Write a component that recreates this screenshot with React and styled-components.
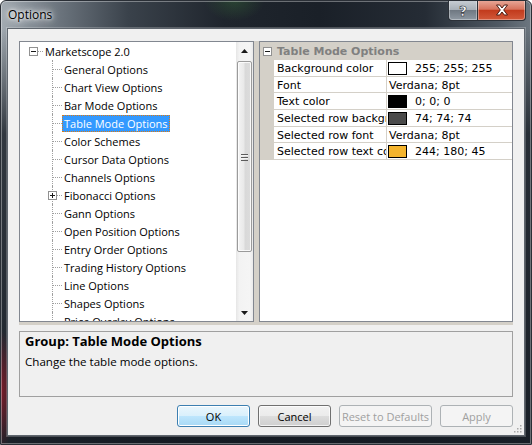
import React from 'react'
import styled, { createGlobalStyle, css } from 'styled-components'

const GlobalStyle = createGlobalStyle`
  html, body {
    margin: 0;
    padding: 0;
    background: #ffffff;
  }
  * {
    box-sizing: border-box;
  }
`

const UI_FONT = `'Open Sans', 'Noto Sans', sans-serif`
const GRID_FONT = `'DejaVu Sans', Verdana, sans-serif`

const treeItems = [
  { label: 'General Options' },
  { label: 'Chart View Options' },
  { label: 'Bar Mode Options' },
  { label: 'Table Mode Options', selected: true },
  { label: 'Color Schemes' },
  { label: 'Cursor Data Options' },
  { label: 'Channels Options' },
  { label: 'Fibonacci Options', collapsed: true },
  { label: 'Gann Options' },
  { label: 'Open Position Options' },
  { label: 'Entry Order Options' },
  { label: 'Trading History Options' },
  { label: 'Line Options' },
  { label: 'Shapes Options' },
  { label: 'Price Overlay Options' },
]

const properties = [
  { name: 'Background color', color: '#ffffff', value: '255; 255; 255' },
  { name: 'Font', value: 'Verdana; 8pt' },
  { name: 'Text color', color: '#000000', value: '0; 0; 0' },
  { name: 'Selected row background color', color: '#4a4a4a', value: '74; 74; 74' },
  { name: 'Selected row font', value: 'Verdana; 8pt' },
  { name: 'Selected row text color', color: '#f4b42d', value: '244; 180; 45' },
]

const ExpandBox = ({ plus }) => (
  <BoxIcon width='9' height='9' viewBox='0 0 9 9'>
    <rect x='0.5' y='0.5' width='8' height='8' fill='#ffffff' stroke='#919191' />
    <path d='M2 4.5h5' stroke='#1a1a1a' />
    {plus && <path d='M4.5 2v5' stroke='#1a1a1a' />}
  </BoxIcon>
)

const Arrow = ({ down }) => (
  <svg width='7' height='4' viewBox='0 0 7 4'>
    {down ? <path d='M0 0h7L3.5 4z' fill='#1a1a1a' /> : <path d='M0 4h7L3.5 0z' fill='#1a1a1a' />}
  </svg>
)

const App = () => {
  return (
    <>
      <GlobalStyle />
      <Window>
        <TitleBar>
          <Title>Options</Title>
          <CaptionButtons>
            <HelpButton>?</HelpButton>
            <CloseButton>
              <svg width='14' height='12' viewBox='0 0 14 12'>
                <path
                  d='M1.5 1h3.2L7 4l2.3-3h3.2L8.7 6l3.8 5H9.3L7 8 4.7 11H1.5l3.8-5z'
                  fill='#ffffff'
                  stroke='#4a1a12'
                  strokeWidth='1'
                  strokeLinejoin='round'
                />
              </svg>
            </CloseButton>
          </CaptionButtons>
        </TitleBar>

        <Client>
          <Split>
            <TreePanel>
              <TreeList>
                <TreeRow>
                  <Elbow>
                    <ExpandBox />
                  </Elbow>
                  <Label>Marketscope 2.0</Label>
                </TreeRow>
                {treeItems.map((item) => (
                  <TreeRow key={item.label}>
                    <Indent />
                    <Elbow $vertical>
                      {item.collapsed && <ExpandBox plus />}
                    </Elbow>
                    <Label $selected={item.selected}>{item.label}</Label>
                  </TreeRow>
                ))}
              </TreeList>
              <ScrollBar>
                <ScrollButton>
                  <Arrow />
                </ScrollButton>
                <Track>
                  <Thumb>
                    <Grip />
                  </Thumb>
                </Track>
                <ScrollButton>
                  <Arrow down />
                </ScrollButton>
              </ScrollBar>
            </TreePanel>

            <GridPanel>
              <CategoryRow>
                <ExpandBox />
                <span>Table Mode Options</span>
              </CategoryRow>
              {properties.map((prop) => (
                <PropRow key={prop.name}>
                  <Margin />
                  <PropName>{prop.name}</PropName>
                  <PropValue $plain={!prop.color}>
                    {prop.color && <Swatch style={{ background: prop.color }} />}
                    {prop.value}
                  </PropValue>
                </PropRow>
              ))}
            </GridPanel>
          </Split>

          <Description>
            <DescTitle>Group: Table Mode Options</DescTitle>
            <DescText>Change the table mode options.</DescText>
          </Description>

          <ButtonRow>
            <Button $w={73} $default>OK</Button>
            <Button $w={73}>Cancel</Button>
            <Button $w={93} disabled>Reset to Defaults</Button>
            <Button $w={73} disabled>Apply</Button>
          </ButtonRow>

          <SizeGrip width='9' height='9' viewBox='0 0 9 9'>
            <g fill='#a8a8a8'>
              <rect x='7' y='1' width='1.5' height='1.5' />
              <rect x='4' y='4' width='1.5' height='1.5' />
              <rect x='7' y='4' width='1.5' height='1.5' />
              <rect x='1' y='7' width='1.5' height='1.5' />
              <rect x='4' y='7' width='1.5' height='1.5' />
              <rect x='7' y='7' width='1.5' height='1.5' />
            </g>
          </SizeGrip>
        </Client>
      </Window>
    </>
  )
}

export default App

const Window = styled.div`
  width: 532px;
  height: 445px;
  display: flex;
  flex-direction: column;
  border: 1px solid #2a2f36;
  border-radius: 6px 6px 0 0;
  box-shadow: inset 0 0 0 1px rgba(255, 255, 255, 0.35);
  overflow: hidden;
  background:
    radial-gradient(ellipse 14px 60px at 0% 88%, rgba(140, 25, 40, 0.85), transparent),
    radial-gradient(ellipse 30px 20px at 44% 0%, rgba(60, 120, 60, 0.35), transparent),
    radial-gradient(ellipse 20px 20px at 49% 40%, rgba(150, 40, 40, 0.3), transparent),
    linear-gradient(180deg, rgba(0, 0, 0, 0) 0%, rgba(0, 0, 0, 0) 6%, rgba(22, 28, 36, 0.8) 30%, rgba(20, 26, 34, 0.95) 100%),
    linear-gradient(90deg, #a3abb2 0%, #6f7881 10%, #3a424b 24%, #1f252d 42%, #1a2028 60%, #252c35 80%, #4f5963 94%, #6d7780 100%);
`

const TitleBar = styled.div`
  height: 27px;
  display: flex;
  align-items: flex-start;
  padding: 0 5px 0 7px;
`

const Title = styled.div`
  font-family: ${UI_FONT};
  font-size: 12px;
  line-height: 14px;
  margin-top: 7px;
  color: #000000;
  text-shadow: 0 0 6px #ffffff, 0 0 10px rgba(255, 255, 255, 0.9), 0 0 3px rgba(255, 255, 255, 0.9);
`

const CaptionButtons = styled.div`
  margin-left: auto;
  display: flex;
  margin-top: -1px;
`

const captionBase = css`
  height: 21px;
  display: flex;
  align-items: center;
  justify-content: center;
  border: 1px solid #2c3138;
  border-top: none;
  box-shadow: inset 0 0 0 1px rgba(255, 255, 255, 0.35);
`

const HelpButton = styled.div`
  ${captionBase}
  width: 29px;
  border-radius: 0 0 0 4px;
  border-right: none;
  background: linear-gradient(180deg, #c9cfd5 0%, #a8b0b8 48%, #6f7882 52%, #8f99a3 100%);
  font-family: 'DejaVu Sans', sans-serif;
  font-weight: bold;
  font-size: 14px;
  color: #ffffff;
  -webkit-text-stroke: 0.6px #2a2f36;
  padding-top: 1px;
`

const CloseButton = styled.div`
  ${captionBase}
  width: 49px;
  border-radius: 0 0 4px 0;
  background: linear-gradient(180deg, #e9ab9c 0%, #d7735d 46%, #c23b1d 52%, #d2593a 100%);
`

const Client = styled.div`
  position: relative;
  flex: 1;
  margin: 0 6px 8px 6px;
  background: #f0f0f0;
  border: 1px solid #5f666e;
  box-shadow: 0 0 0 1px rgba(255, 255, 255, 0.22);
  padding: 12px 11px 8px 11px;
  display: flex;
  flex-direction: column;
  font-family: ${UI_FONT};
  font-size: 11px;
`

const Split = styled.div`
  height: 284px;
  display: flex;
  gap: 5px;
  padding-bottom: 3px;
  background: #d4d0c8;
`

const TreePanel = styled.div`
  width: 235px;
  flex: none;
  border: 1px solid #828790;
  background: #ffffff;
  display: flex;
  overflow: hidden;
`

const TreeList = styled.div`
  flex: 1;
  padding-left: 4px;
  overflow: hidden;
  color: #000000;
  font-size: 11px;
`

const TreeRow = styled.div`
  display: flex;
  align-items: center;
  height: 18px;
`

const Indent = styled.span`
  width: 19px;
  flex: none;
`

const Elbow = styled.span`
  position: relative;
  width: 19px;
  height: 18px;
  flex: none;

  &::before {
    content: '';
    position: absolute;
    left: 10px;
    right: 0;
    top: 9px;
    border-top: 1px dotted #a0a0a0;
  }

  &::after {
    content: '';
    display: ${({ $vertical }) => ($vertical ? 'block' : 'none')};
    position: absolute;
    left: 9px;
    top: 0;
    bottom: 0;
    border-left: 1px dotted #a0a0a0;
  }
`

const BoxIcon = styled.svg`
  position: relative;
  z-index: 1;
  display: block;
  flex: none;
  ${Elbow} & {
    position: absolute;
    left: 5px;
    top: 5px;
  }
`

const Label = styled.span`
  height: 17px;
  line-height: 17px;
  padding: 0 2px;
  white-space: nowrap;
  ${({ $selected }) =>
    $selected &&
    css`
      background: #3399ff;
      color: #ffffff;
      outline: 1px dotted #e07a10;
      outline-offset: -1px;
    `}
`

const ScrollBar = styled.div`
  width: 17px;
  flex: none;
  display: flex;
  flex-direction: column;
  background: linear-gradient(90deg, #e6e6e6 0%, #f3f3f3 20%, #f5f5f5 80%, #eaeaea 100%);
`

const ScrollButton = styled.div`
  height: 17px;
  display: flex;
  align-items: center;
  justify-content: center;
`

const Track = styled.div`
  flex: 1;
  padding: 2px 1px 0 1px;
`

const Thumb = styled.div`
  height: 191px;
  border: 1px solid #9b9b9b;
  border-radius: 2px;
  background: linear-gradient(90deg, #f4f4f4 0%, #e9e9e9 45%, #d9d9d9 55%, #dcdcdc 100%);
  box-shadow: inset 0 0 0 1px rgba(255, 255, 255, 0.8);
  display: flex;
  align-items: center;
  justify-content: center;
`

const Grip = styled.div`
  width: 7px;
  height: 7px;
  background: repeating-linear-gradient(180deg, #5c5c5c 0 1px, #f4f4f4 1px 2px, transparent 2px 3px);
  margin-top: 2px;
`

const GridPanel = styled.div`
  flex: 1;
  border: 1px solid #828790;
  background: #ffffff;
  overflow: hidden;
  font-family: ${GRID_FONT};
  font-size: 11px;
  color: #000000;
`

const CategoryRow = styled.div`
  height: 18px;
  display: flex;
  align-items: center;
  gap: 5px;
  padding-left: 3px;
  background: #d4d0c8;
  font-weight: bold;
  color: #808080;
`

const PropRow = styled.div`
  display: grid;
  grid-template-columns: 14px 113px 1fr;
  height: 16.7px;
`

const Margin = styled.div`
  background: #d4d0c8;
`

const PropName = styled.div`
  padding-left: 3px;
  border-right: 1px solid #d4d0c8;
  border-bottom: 1px solid #d4d0c8;
  white-space: nowrap;
  overflow: hidden;
  line-height: 17px;
`

const PropValue = styled.div`
  display: flex;
  align-items: center;
  gap: 8px;
  padding-left: ${({ $plain }) => ($plain ? '2px' : '1px')};
  padding-top: 1px;
  border-bottom: 1px solid #d4d0c8;
  white-space: nowrap;
  overflow: hidden;
`

const Swatch = styled.span`
  width: 19px;
  height: 13px;
  flex: none;
  border: 1px solid #000000;
`

const Description = styled.div`
  height: 66px;
  margin-top: 6px;
  border: 1px solid #a0a0a0;
  padding: 1px 5px;
  color: #000000;
`

const DescTitle = styled.div`
  font-weight: bold;
  font-size: 13px;
  line-height: 16px;
`

const DescText = styled.div`
  margin-top: 5px;
  font-size: 11.6px;
  line-height: 16px;
`

const ButtonRow = styled.div`
  margin-top: 8px;
  display: flex;
  justify-content: flex-end;
  gap: 8px;
`

const Button = styled.button`
  width: ${({ $w }) => $w}px;
  height: 22px;
  padding: 0;
  font-family: ${UI_FONT};
  font-size: 11px;
  color: #000000;
  border: 1px solid #707070;
  border-radius: 3px;
  background: linear-gradient(180deg, #f2f2f2 0%, #ebebeb 50%, #dddddd 50%, #cfcfcf 100%);
  box-shadow: inset 0 0 0 1px rgba(255, 255, 255, 0.75);

  ${({ $default }) =>
    $default &&
    css`
      border-color: #3c7fb1;
      background: linear-gradient(180deg, #eaf6fd 0%, #d9f0fc 50%, #bee6fd 50%, #a7d9f5 100%);
      box-shadow: inset 0 0 0 1px #ffffff;
    `}

  &:disabled {
    color: #a0a0a0;
    border-color: #adb2b5;
    background: #f4f4f4;
    box-shadow: none;
  }
`

const SizeGrip = styled.svg`
  position: absolute;
  right: 2px;
  bottom: 2px;
`
